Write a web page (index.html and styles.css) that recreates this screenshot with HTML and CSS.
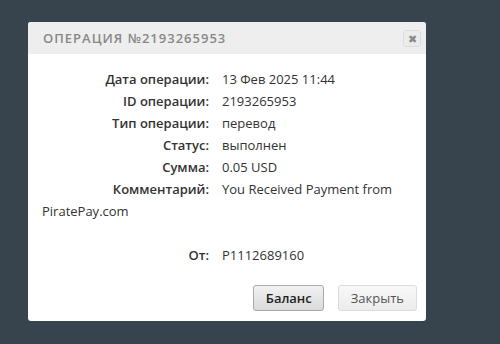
FILE: index.html
```html
<!DOCTYPE html>
<html lang="ru">
<head>
    <meta charset="UTF-8">
    <title>Операция</title>
    <link rel="stylesheet" href="styles.css">
</head>
<body>
    <div class="dialog">
        <div class="dialog-header">
            <span class="dialog-title">Операция №2193265953</span>
            <span class="dialog-close">✖</span>
        </div>
        <div class="dialog-body">
            <div class="row"><span class="label">Дата операции:</span>13 Фев 2025 11:44</div>
            <div class="row"><span class="label">ID операции:</span>2193265953</div>
            <div class="row"><span class="label">Тип операции:</span>перевод</div>
            <div class="row"><span class="label">Статус:</span>выполнен</div>
            <div class="row"><span class="label">Сумма:</span>0.05 USD</div>
            <div class="row"><span class="label">Комментарий:</span><span>You Received Payment from</span><br><span>PiratePay.com</span></div>
            <div class="row spacer"></div>
            <div class="row"><span class="label">От:</span>P1112689160</div>
        </div>
        <div class="dialog-footer">
            <button class="btn btn-primary">Баланс</button>
            <button class="btn">Закрыть</button>
        </div>
    </div>
</body>
</html>
```

FILE: styles.css
```css
* {
    margin: 0;
    padding: 0;
    box-sizing: border-box;
}

body {
    font-family: "Open Sans", "Noto Sans", sans-serif;
    background: #37444d;
    color: #333;
    height: 344px;
    overflow: hidden;
    padding: 22px 0 0 28px;
}

.dialog {
    width: 398px;
    height: 299px;
    background: #fff;
    border-radius: 3px;
    display: flex;
    flex-direction: column;
}

.dialog-header {
    background: #eeeeee;
    height: 32px;
    border-radius: 3px 3px 0 0;
    display: flex;
    align-items: center;
    justify-content: space-between;
    padding: 0 5px 0 15px;
}

.dialog-title {
    font-size: 13px;
    font-weight: 600;
    letter-spacing: 1px;
    text-transform: uppercase;
    color: #888;
}

.dialog-close {
    width: 18px;
    height: 17px;
    border: 1px solid #dcdcdc;
    border-radius: 3px;
    background: #ececec;
    color: #8a8a8a;
    font-size: 11px;
    display: flex;
    align-items: center;
    justify-content: center;
    margin-top: 1px;
}

.dialog-body {
    flex: 1;
    padding: 14px 14px 0 14px;
    font-size: 13px;
    line-height: 22px;
}

.row {
    min-height: 22px;
}

.label {
    display: inline-block;
    width: 167px;
    text-align: right;
    font-weight: 600;
    margin-right: 13px;
}

.dialog-footer {
    display: flex;
    justify-content: flex-end;
    gap: 14px;
    padding: 0 9px 10px 0;
}

.btn {
    font-family: "Open Sans", "Noto Sans", sans-serif;
    font-size: 13px;
    height: 26px;
    padding: 0 12px;
    border-radius: 3px;
    border: 1px solid #dcdcdc;
    background: linear-gradient(#f8f8f8, #ececec);
    color: #555;
}

.btn-primary {
    width: 71px;
    border-color: #a9a9a9;
    background: linear-gradient(#f2f2f2, #dadada);
    color: #222;
    font-weight: 600;
}
```
